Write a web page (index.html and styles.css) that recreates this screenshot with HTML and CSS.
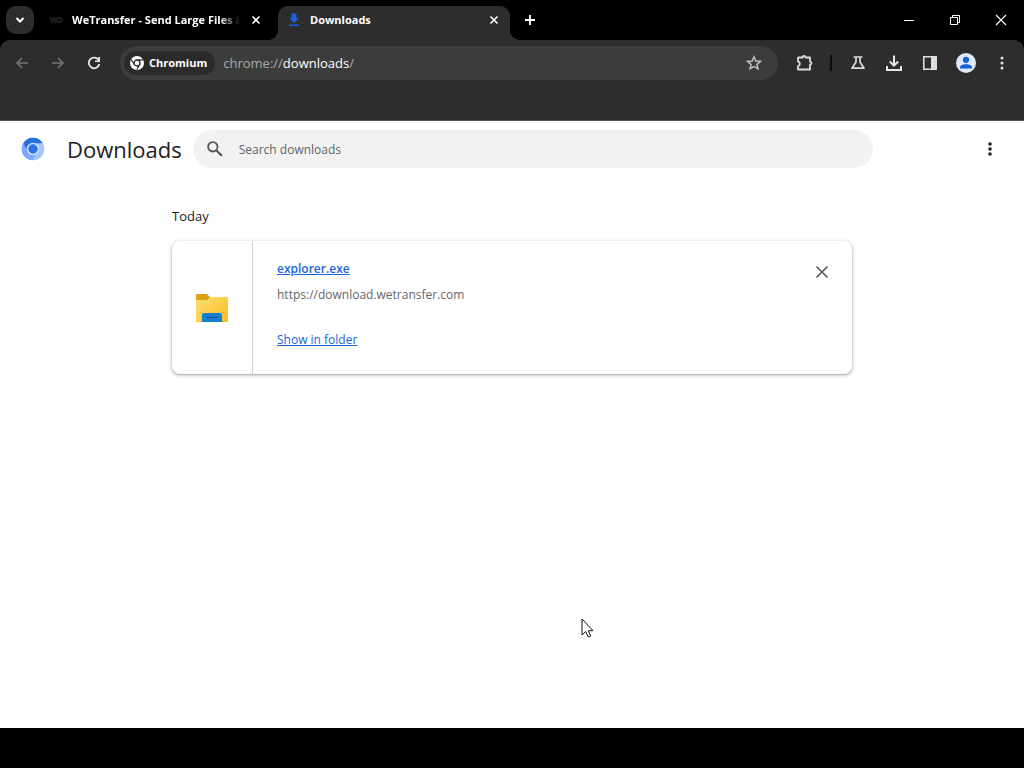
FILE: index.html
```html
<!DOCTYPE html>
<html lang="en">
<head>
<meta charset="utf-8">
<meta name="viewport" content="width=device-width, initial-scale=1">
<title>Downloads</title>
<link rel="stylesheet" href="styles.css">
</head>
<body>
<header class="browser">
  <div class="tab-strip">
    <button class="tab-search" aria-label="Search tabs"><svg width="16" height="16" viewBox="0 0 16 16"><path d="M4.500 6 8 9.500 11.500 6" fill="none" stroke="#fff" stroke-width="2"/></svg></button>
    <div class="tab">
      <svg class="favicon" width="16" height="16" viewBox="0 0 16 16"><path d="M2 5l2 5 1.500-4L7 10l1-5M9 9c0 2 5 1 5-1s-4-3-5-1z" fill="none" stroke="#1d1d1d" stroke-width="2"/></svg>
      <span class="tab-title fade">WeTransfer - Send Large Files &amp;</span>
      <button class="tab-close" aria-label="Close tab"><svg width="16" height="16" viewBox="0 0 16 16"><path d="M4.500 4.500l7 7m0-7l-7 7" stroke="#fff" stroke-width="1.600"/></svg></button>
    </div>
    <div class="tab active">
      <svg class="favicon" width="16" height="16" viewBox="0 0 16 16"><path d="M5.500 1.500h5V6H13L8 11 3 6h2.500zM3 12.500h10V14H3z" fill="#1a63e0"/></svg>
      <span class="tab-title">Downloads</span>
      <button class="tab-close" aria-label="Close tab"><svg width="16" height="16" viewBox="0 0 16 16"><path d="M4.500 4.500l7 7m0-7l-7 7" stroke="#fff" stroke-width="1.600"/></svg></button>
    </div>
    <button class="new-tab" aria-label="New tab"><svg width="16" height="16" viewBox="0 0 16 16"><path d="M8 3v10M3 8h10" stroke="#fff" stroke-width="1.800"/></svg></button>
    <div class="window-controls">
      <button class="window-button" aria-label="Minimize"><svg width="12" height="12" viewBox="0 0 12 12"><path d="M1 6.500h10" stroke="#fff"/></svg></button>
      <button class="window-button" aria-label="Restore"><svg width="12" height="12" viewBox="0 0 12 12"><path d="M1.500 3.500h7v7h-7zM3.500 3V1.500h7v7H9" fill="none" stroke="#fff"/></svg></button>
      <button class="window-button" aria-label="Close"><svg width="12" height="12" viewBox="0 0 12 12"><path d="M1 1l10 10M11 1L1 11" stroke="#fff" stroke-width="1.200"/></svg></button>
    </div>
  </div>
  <div class="toolbar">
    <nav class="tools" aria-label="Navigation">
      <button class="tool" aria-label="Back"><svg width="16" height="16" viewBox="0 0 16 16"><path d="M14 8H3M8 3L3 8l5 5" fill="none" stroke="#777" stroke-width="1.600"/></svg></button>
      <button class="tool" aria-label="Forward"><svg width="16" height="16" viewBox="0 0 16 16"><path d="M2 8h11M8 3l5 5-5 5" fill="none" stroke="#777" stroke-width="1.600"/></svg></button>
      <button class="tool" aria-label="Reload"><svg width="16" height="16" viewBox="0 0 16 16"><path d="M12.800 5.500A5.300 5.300 0 1 0 13.300 9" fill="none" stroke="#e8e8e8" stroke-width="1.800"/><path d="M14 2v5H9V5.600h3.200V2z" fill="#e8e8e8"/></svg></button>
    </nav>
    <div class="omnibox">
      <button class="chip"><svg width="14" height="14" viewBox="0 0 14 14"><circle cx="7" cy="7" r="7" fill="#fff"/><circle cx="7" cy="7" r="3" fill="#fff" stroke="#2b2b2b" stroke-width="1.300"/><path d="M7 3.900h6.200M4.300 8.500L1.200 3.500M9.700 8.500L6.800 13.500" stroke="#2b2b2b" stroke-width="1.200"/></svg>Chromium</button>
      <a class="url" href="#"><span class="dim">chrome://</span>downloads<span class="dim">/</span></a>
      <button class="tool" aria-label="Bookmark this tab"><svg width="16" height="16" viewBox="0 0 16 16"><path d="M8 1.800l1.800 4.200 4.600.4-3.500 3 1.100 4.500L8 11.500l-4 2.400 1.100-4.500-3.500-3 4.600-.4z" fill="none" stroke="#c7c7c7" stroke-width="1.400"/></svg></button>
    </div>
    <div class="tools">
      <button class="tool" aria-label="Extensions"><svg width="18" height="18" viewBox="0 0 18 18"><path d="M3.500 3.500h4c.3-2 2.700-2 3 0h4.500v4.200c2 .3 2 2.700 0 3v4.800h-12v-3.300c2.500-.7 2.500-4.100 0-4.800v-3.400z" fill="none" stroke="#ddd" stroke-width="1.800" stroke-linejoin="round"/></svg></button>
      <span class="divider"></span>
      <button class="tool" aria-label="Experiments"><svg width="16" height="16" viewBox="0 0 16 16"><path d="M3.500 2h9M6 2v5l-4 6.200h12L10 7V2" fill="none" stroke="#ddd" stroke-width="1.700" stroke-linejoin="round"/></svg></button>
      <button class="tool" aria-label="Downloads"><svg width="18" height="18" viewBox="0 0 18 18"><path d="M9 1.500v10M4.800 7.500L9 11.600l4.200-4.100M2 12v4h14v-4" fill="none" stroke="#e8e8e8" stroke-width="2"/></svg></button>
      <button class="tool" aria-label="Side panel"><svg width="16" height="16" viewBox="0 0 16 16"><path d="M1.800 1.800h12.400v12.400H1.800z" fill="none" stroke="#ddd" stroke-width="1.600"/><path d="M9 2h5v12H9z" fill="#ddd"/></svg></button>
      <button class="tool" aria-label="Profile"><svg width="20" height="20" viewBox="0 0 20 20"><circle cx="10" cy="10" r="10" fill="#dfe9fc"/><circle cx="10" cy="6.800" r="3.100" fill="#1260d8"/><path d="M4 15.500v-1.300c0-4 12-4 12 0v1.300z" fill="#1260d8"/></svg></button>
      <button class="tool" aria-label="Browser menu"><svg width="16" height="16" viewBox="0 0 16 16"><g fill="#e3e3e3"><circle cx="8" cy="3" r="1.500"/><circle cx="8" cy="8" r="1.500"/><circle cx="8" cy="13" r="1.500"/></g></svg></button>
    </div>
  </div>
  <div class="bookmarks-bar"></div>
</header>
<main class="page">
  <div class="page-header">
    <svg class="logo" width="24" height="24" viewBox="0 0 24 24"><circle cx="12" cy="12" r="11.300" fill="#a4c5fb"/><path d="M12 12L2.200 6.300A11.300 11.300 0 0 0 11.500 23.300L17 14z" fill="#78aafa"/><path d="M2.200 6.300A11.300 11.300 0 0 1 21.800 6.300H12L7 14.500z" fill="#2a6cd9"/><circle cx="12" cy="12" r="5.500" fill="#2b73e6" stroke="#c9defd" stroke-width="1.600"/></svg>
    <h1 class="page-title">Downloads</h1>
    <label class="search"><svg width="20" height="20" viewBox="0 0 20 20"><circle cx="7.800" cy="7.800" r="4.700" fill="none" stroke="#555" stroke-width="1.800"/><path d="M11.200 11.200l5.600 5.600" stroke="#555" stroke-width="2.200"/></svg><input class="search-input" type="search" placeholder="Search downloads" aria-label="Search downloads"></label>
    <button class="page-menu" aria-label="More actions"><svg width="16" height="16" viewBox="0 0 16 16"><g fill="#222"><circle cx="8" cy="3" r="1.800"/><circle cx="8" cy="8" r="1.800"/><circle cx="8" cy="13" r="1.800"/></g></svg></button>
  </div>
  <section class="downloads">
    <h2 class="date">Today</h2>
    <article class="card">
      <div class="file-icon"><svg width="32" height="32" viewBox="0 0 32 32"><defs><linearGradient id="folder" x2="1" y2="1"><stop stop-color="#ffdf78"/><stop offset="1" stop-color="#f8bd1d"/></linearGradient></defs><path d="M0 3q0-1 1-1h10l3 3h17q1 0 1 1v6H0z" fill="#dda011"/><path d="M0 8h11l3-3h17q1 0 1 1v23q0 1-1 1H0z" fill="url(#folder)"/><path d="M6 30v-7q0-2 2-2h16q2 0 2 2v7z" fill="#1580d0"/><path d="M11 25.500h10" stroke="#11599c" stroke-width="1.500"/></svg></div>
      <div class="details">
        <a class="file-name" href="#">explorer.exe</a>
        <span class="source">https://download.wetransfer.com</span>
        <a class="show" href="#">Show in folder</a>
      </div>
      <button class="remove" aria-label="Remove from list"><svg width="16" height="16" viewBox="0 0 16 16"><path d="M2.500 2.500l11 11m0-11l-11 11" stroke="#555" stroke-width="1.600"/></svg></button>
    </article>
  </section>
  <svg class="cursor" width="14" height="21" viewBox="0 0 14 21"><path d="M1 1v16l3.700-3.500L7.200 19l2.500-1-2.400-5.300H12z" fill="#fff" stroke="#111"/></svg>
</main>
<footer class="taskbar"></footer>
</body>
</html>
```
FILE: styles.css
```css
* { box-sizing: border-box; }

body {
  margin: 0;
  min-height: 100vh;
  display: flex;
  flex-direction: column;
  background: #fff;
  color: #202124;
  font: 12px/20px "Open Sans", "Noto Sans", sans-serif;
}

button {
  display: flex;
  align-items: center;
  justify-content: center;
  flex: none;
  padding: 0;
  border: 0;
  background: none;
  color: inherit;
  font: inherit;
}

svg { display: block; flex: none; }

.browser { background: #000; color: #fff; }

.tab-strip { display: flex; height: 40px; padding-left: 6px; }

.tab-search {
  width: 28px;
  height: 28px;
  margin: 6px 6px 0 0;
  border-radius: 10px;
  background: #2d2d2d;
}

.tab {
  position: relative;
  display: flex;
  align-items: center;
  gap: 8px;
  flex: 0 1 232px;
  min-width: 0;
  height: 34px;
  margin: 6px 6px 0 0;
  padding: 0 8px 6px;
}

.tab.active { border-radius: 10px 10px 0 0; background: #2d2d2d; }

.tab.active::before,
.tab.active::after {
  content: "";
  position: absolute;
  bottom: 0;
  width: 10px;
  height: 10px;
}

.tab.active::before { right: 100%; background: radial-gradient(circle at 0 0, transparent 10px, #2d2d2d 10px); }
.tab.active::after { left: 100%; background: radial-gradient(circle at 100% 0, transparent 10px, #2d2d2d 10px); }

.tab-title {
  flex: 1;
  min-width: 0;
  overflow: hidden;
  white-space: nowrap;
  font-size: 11px;
  font-weight: 700;
  line-height: 22px;
}

.fade { mask-image: linear-gradient(to right, #000 88%, transparent); }

.tab-close { width: 16px; height: 16px; }

.new-tab { width: 28px; height: 28px; margin-top: 6px; }

.window-controls { display: flex; margin-left: auto; }

.window-button { width: 46px; height: 40px; }

.toolbar {
  display: flex;
  align-items: center;
  gap: 12px;
  height: 46px;
  padding: 0 8px;
  border-radius: 10px 10px 0 0;
  background: #2d2d2d;
}

.tools { display: flex; align-items: center; gap: 8px; }

.tool { width: 28px; height: 28px; }

.divider { width: 2px; height: 16px; margin: 0 4px; background: #0c0c0c; }

.omnibox {
  display: flex;
  align-items: center;
  flex: 1;
  min-width: 0;
  height: 34px;
  padding: 0 10px 0 4px;
  border-radius: 17px;
  background: #3c3c3c;
}

.chip {
  gap: 5px;
  height: 24px;
  padding: 0 8px 0 6px;
  border-radius: 12px;
  background: #2b2b2b;
  font-size: 11px;
  font-weight: 700;
}

.url {
  flex: 1;
  min-width: 0;
  margin-left: 8px;
  overflow: hidden;
  color: #fff;
  font-size: 13px;
  text-decoration: none;
}

.dim { color: #aaa; }

.bookmarks-bar { height: 35px; border-bottom: 1px solid #555; background: #2d2d2d; }

.page { position: relative; flex: 1; }

.page-header { display: flex; align-items: center; height: 56px; padding: 0 20px 0 21px; }

.page-title { margin: 0 11px 0 22px; font-size: 22px; font-weight: 500; line-height: 28px; }

.search {
  display: flex;
  align-items: center;
  gap: 14px;
  flex: 0 1 680px;
  min-width: 0;
  height: 38px;
  padding: 0 12px;
  border-radius: 19px;
  background: #f2f2f2;
}

.search-input {
  flex: 1;
  min-width: 0;
  padding: 1px 0 0;
  border: 0;
  outline: 0;
  background: none;
  color: #202124;
  font: inherit;
}

.search-input::placeholder { color: #5f6368; opacity: 1; }

.page-menu { width: 28px; height: 28px; margin-left: auto; }

.downloads { max-width: 680px; margin: 0 auto; padding-top: 29px; }

.date { margin: 0 0 15px; font-size: 13px; font-weight: 400; line-height: 20px; }

.card {
  display: flex;
  border-radius: 8px;
  background: #fff;
  box-shadow: 0 1px 2px rgb(60 64 67 / 35%), 0 1px 4px 1px rgb(60 64 67 / 18%);
}

.file-icon {
  display: flex;
  align-items: center;
  justify-content: center;
  flex: 0 0 81px;
  border-right: 1px solid #d2d2d2;
}

.details {
  display: flex;
  flex-direction: column;
  align-items: flex-start;
  flex: 1;
  min-width: 0;
  padding: 18px 24px 24px;
}

.file-name { color: #1a66d6; font-weight: 600; }

.source { margin-top: 6px; color: #666; }

.show { margin-top: 25px; color: #1a66d6; }

.remove { width: 28px; height: 28px; margin: 17px 16px 0 0; }

.cursor { position: absolute; left: 581px; top: 497px; }

.taskbar { height: 40px; background: #000; }
```
